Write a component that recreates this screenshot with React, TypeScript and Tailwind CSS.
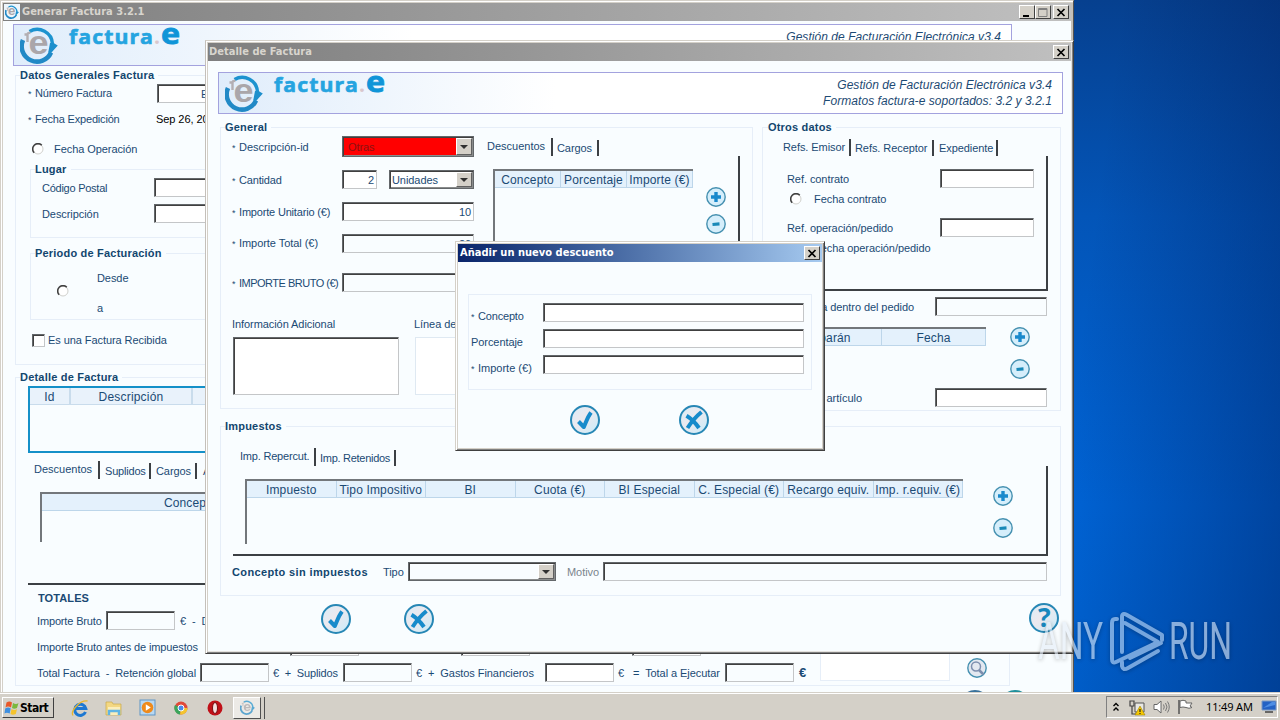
import type { ReactNode } from "react";
import clsx from "clsx";

type BoxProps = { className?: string; children?: ReactNode };

function Row({ className, children }: BoxProps) {
  return <div className={clsx("flex h-5 shrink-0 items-center whitespace-pre", className)}>{children}</div>;
}

function Label({ className, children }: BoxProps) {
  return <span className={clsx("shrink-0 whitespace-pre", className)}>{children}</span>;
}

function Required({ className, tracking = "tracking-[-0.18px]", children }: BoxProps & { tracking?: string }) {
  return (
    <Label className={clsx(tracking, className)}>
      <span className="inline-block w-[7px] text-[9px]">*</span>
      {children}
    </Label>
  );
}

function Field({ className, low, children }: BoxProps & { low?: boolean }) {
  return (
    <div
      className={clsx(
        "shrink-0 border border-t-[#63676a] border-r-[#c4c6c8] border-b-[#c4c6c8] border-l-[#63676a] pt-px leading-[17px] shadow-[inset_1px_1px_0_#404040]",
        low ? "self-end" : "self-start",
        className
      )}
    >
      {children}
    </div>
  );
}

function Combo({ className, children }: BoxProps) {
  return (
    <div
      className={clsx(
        "flex shrink-0 items-stretch justify-between self-start border border-t-[#63676a] border-r-[#63676a] border-b-[#63676a] border-l-[#63676a] p-px shadow-[inset_1px_1px_0_#404040,inset_-1px_-1px_0_#8a8c8c]",
        className
      )}
    >
      <span className="pl-px leading-[16px]">{children}</span>
      <span className="flex w-[16px] items-center justify-center border border-t-white border-r-[#606060] border-b-[#606060] border-l-white bg-[#d4d0c8]">
        <svg width="8" height="4" viewBox="0 0 8 4">
          <path d="M0 0h8L4 4z" fill="#303030" />
        </svg>
      </span>
    </div>
  );
}

function Group({ title, className, children }: BoxProps & { title?: string }) {
  return (
    <section className={clsx("shrink-0 border border-[#e6eef8]", className)}>
      {title && (
        <h2 className="-mt-[8px] flex h-[14px] pl-[4px] text-[11px] font-bold tracking-[0.2px] text-[#12466e]">
          <span className="bg-[#f9fdff] pr-1">{title}</span>
        </h2>
      )}
      {children}
    </section>
  );
}

function Tab({ className, children }: BoxProps) {
  return <div className={clsx("shrink-0 overflow-hidden border-r-2 border-[#3c4044] leading-[17px] whitespace-pre", className)}>{children}</div>;
}

function Table({ columns, className, cell }: { columns: string[]; className?: string; cell?: string }) {
  return (
    <div className={clsx("shrink-0 overflow-hidden border-t-2 border-l-2 border-[#73777b]", className)}>
      <div className="flex h-[17px] border-b border-[#bdd6ea] bg-[#e4f1fc] text-[12px] leading-[18px] tracking-[0.15px]">
        {columns.map((name, i) => (
          <div key={i} className={clsx("overflow-hidden border-r border-[#bdd6ea] text-center whitespace-nowrap", cell ?? "flex-1")}>
            {name}
          </div>
        ))}
      </div>
    </div>
  );
}

function Radio() {
  return (
    <svg width="12" height="12" viewBox="0 0 12 12" className="shrink-0">
      <circle cx="6" cy="6" r="5" fill="#fff" stroke="#d0d0cc" />
      <path d="M2.2 9.8A5.2 5.2 0 0 1 9.8 2.2" fill="none" stroke="#404040" strokeWidth="1.5" />
    </svg>
  );
}

function RoundIcon({ kind }: { kind: "check" | "cross" | "help" }) {
  return (
    <svg width="30" height="30" viewBox="0 0 30 30" className="shrink-0">
      <defs>
        <linearGradient id="round" x1="0" y1="0" x2="1" y2="1">
          <stop offset="0" stopColor="#d9edf9" />
          <stop offset="0.45" stopColor="#ece9ee" />
          <stop offset="1" stopColor="#c4ecfb" />
        </linearGradient>
      </defs>
      <circle cx="15" cy="15" r="14" fill="url(#round)" stroke="#2787b5" strokeWidth="2" />
      {kind === "check" && <path d="M8.5 16.5l5.3 5.5C16 17.500 17.500 12 21 7.500" fill="none" stroke="#178bcb" strokeWidth="4" strokeLinejoin="round" />}
      {kind === "cross" && (
        <g fill="none" stroke="#178bcb" strokeWidth="4">
          <path d="M22.5 7C17 11.500 13 16 8.500 23" />
          <path d="M7.500 10.800C12 13.500 16.500 18 20 23" />
        </g>
      )}
      {kind === "help" && (
        <text x="9" y="24" textLength="12.5" lengthAdjust="spacingAndGlyphs" fontFamily="Noto Sans" fontSize="26" fontWeight="bold" fill="#1787bd">
          ?
        </text>
      )}
    </svg>
  );
}

function SmallIcon({ kind }: { kind: "plus" | "minus" | "search" }) {
  return (
    <svg width="20" height="20" viewBox="0 0 20 20" className="shrink-0">
      <circle cx="10" cy="10" r="9.200" fill={kind === "search" ? "#e3e8f0" : "#d5eefb"} stroke="#4590b0" strokeWidth="1.400" />
      {kind === "plus" && <path d="M5 10h10M10 5v10" stroke="#1989cc" strokeWidth="3.400" />}
      {kind === "minus" && <path d="M6.500 10.500l7-0.600" stroke="#1989b8" strokeWidth="3.200" />}
      {kind === "search" && (
        <g fill="none" stroke="#7d8fae">
          <circle cx="9" cy="8.500" r="4.500" strokeWidth="1.500" />
          <path d="M12 12l4.500 4.500" strokeWidth="2.500" />
        </g>
      )}
    </svg>
  );
}

function Swirl({ size }: { size: number }) {
  return (
    <svg width={size} height={size} viewBox="0 0 38 38" className="shrink-0">
      <path d="M9.500 5.500A15.300 15.300 0 0 1 32.500 18" fill="none" stroke="#1d93cf" strokeWidth="3.400" />
      <path d="M31 26.500A15.300 15.300 0 0 1 3 14" fill="none" stroke="#2189c6" strokeWidth="4.600" />
      <path d="M30 17h3.500l4.300 2.500-4.500 5-3 3.500-2-2z" fill="#1d8fcc" />
      <path d="M4.500 8.500h3q0-2 3-1.500M7.500 8v8" fill="none" stroke="#b3aeb2" strokeWidth="2.400" />
      <text x="8.500" y="28" textLength="20" lengthAdjust="spacingAndGlyphs" fontFamily="Liberation Sans" fontSize="34" fontWeight="bold" fill="#aaa6aa">
        e
      </text>
    </svg>
  );
}

function Banner({ className }: { className?: string }) {
  return (
    <header className={clsx("flex h-[42px] shrink-0 items-start justify-between border border-[#a3a2de] bg-linear-to-r from-[#e0edfb] to-white to-40%", className)}>
      <div className="flex">
        <div className="mt-px ml-[6px]">
          <Swirl size={38} />
        </div>
        <svg width="120" height="28" viewBox="0 0 120 28" className="ml-[10px]">
          <g fontFamily="Open Sans" fontWeight="bold">
            <text x="1" y="19" fontSize="20" letterSpacing="1" fill="#25a4e0" stroke="#25a4e0" strokeWidth="0.600" textLength="85" lengthAdjust="spacingAndGlyphs">
              factura
            </text>
            <text x="86" y="19" fontSize="21" fill="#d9c7cd">
              .
            </text>
            <text x="93" y="19" fontSize="29" fill="#0f95d8" stroke="#0f95d8" strokeWidth="0.800" textLength="19" lengthAdjust="spacingAndGlyphs">
              e
            </text>
          </g>
        </svg>
      </div>
      <div className="mt-[4px] mr-[10px] text-right text-[12px] leading-[16px] tracking-[0.05px] text-[#1d4a73] italic">
        <p>Gestión de Facturación Electrónica v3.4</p>
        <p>Formatos factura-e soportados: 3.2 y 3.2.1</p>
      </div>
    </header>
  );
}

function WinButton({ kind }: { kind: "min" | "max" | "close" }) {
  return (
    <span className="flex h-[14px] w-[16px] items-center justify-center border border-t-white border-r-[#404040] border-b-[#404040] border-l-white bg-[#d4d0c8]">
      <svg width="12" height="11" viewBox="0 0 12 11" fill="none">
        {kind === "min" && <path d="M2 9h6" stroke="#000" strokeWidth="2" />}
        {kind === "max" && <path d="M1.500 1.500h8.500v8h-8.500zM1.500 2.500h8.500" stroke="#808080" />}
        {kind === "close" && <path d="M2.500 2l7 7M9.500 2l-7 7" stroke="#000" strokeWidth="1.700" />}
      </svg>
    </span>
  );
}

function TitleBar({ title, active, main }: { title: string; active?: boolean; main?: boolean }) {
  return (
    <div
      className={clsx(
        "flex h-[18px] shrink-0 items-center pr-[2px] pl-[1px] font-['DejaVu_Sans_Condensed','DejaVu_Sans',sans-serif] text-[11px] font-bold",
        active ? "bg-linear-to-r from-[#0a246a] to-[#a6caf0] text-white" : "bg-linear-to-r from-[#7f7f7f] to-[#c0c0c0] text-[#d8d5ce]"
      )}
    >
      {main && (
        <span className="mr-[2px] flex h-4 w-4 items-center justify-center bg-[#eef6fb]">
          <Swirl size={14} />
        </span>
      )}
      <span className={clsx("whitespace-nowrap", active ? "pl-px tracking-[0.02px]" : "tracking-[0.02px]")}>{title}</span>
      <span className="ml-auto flex">
        {main && <WinButton kind="min" />}
        {main && <WinButton kind="max" />}
        <span className={main ? "ml-[2px]" : ""}>
          <WinButton kind="close" />
        </span>
      </span>
    </div>
  );
}

function MainWindow() {
  return (
    <div className="absolute top-0 left-0 flex h-[693px] w-[1074px] flex-col overflow-hidden border border-t-[#d4d0c8] border-r-[#55524e] border-l-[#d4d0c8] bg-[#f9fdff] p-[2px] shadow-[inset_1px_1px_0_#fff,inset_2px_2px_0_#d4d0c8,inset_-2px_0_0_#c4c0b8]">
      <TitleBar title="Generar Factura 3.2.1" main />
      <Banner className="mt-[3px] ml-[10px] w-[999px]" />
      <Group title="Datos Generales Factura" className="mt-[9px] ml-[12px] h-[290px] w-[995px]">
        <Row className="mt-px pl-[12px]">
          <Required className="w-[129px]">Número Factura</Required>
          <Field low className="h-[19px] w-[90px] bg-white pl-[43px]">
            E
          </Field>
        </Row>
        <Row className="mt-[6px] pl-[12px]">
          <Required className="w-[128px]">Fecha Expedición</Required>
          <Label className="pb-px text-black">Sep 26, 2018</Label>
        </Row>
        <Row className="mt-[10px] pl-[16px]">
          <Radio />
          <Label className="ml-[10px]">Fecha Operación</Label>
        </Row>
        <Group title="Lugar" className="mt-[10px] ml-[14px] h-[69px]">
          <Row className="mt-[2px] pl-[11px]">
            <Label className="w-[112px] tracking-[-0.25px]">Código Postal</Label>
            <Field className="h-[19px] w-[120px] bg-white" />
          </Row>
          <Row className="mt-[6px] pl-[11px]">
            <Label className="w-[112px]">Descripción</Label>
            <Field className="h-[19px] w-[120px] bg-white" />
          </Row>
        </Group>
        <Group title="Periodo de Facturación" className="mt-[15px] ml-[14px] h-[67px]">
          <div className="flex pt-[8px] pl-[26px]">
            <div className="mt-[17px]">
              <Radio />
            </div>
            <div className="ml-[28px]">
              <Row>Desde</Row>
              <Row className="mt-[10px]">a</Row>
            </div>
          </div>
        </Group>
        <Row className="mt-[10px] pl-[16px]">
          <Field className="mt-[4px] h-[13px] w-[13px] bg-white" />
          <Label className="ml-[3px]">Es una Factura Recibida</Label>
        </Row>
      </Group>
      <Group title="Detalle de Factura" className="mt-[12px] ml-[12px] h-[309px] w-[995px]">
        <div className="mt-[2px] ml-[12px] h-[67px] border-2 border-[#1490c8]">
          <div className="flex h-[17px] border-b border-[#c9dcec] bg-[#e9f2fb] text-[12px] leading-[18px] tracking-[0.2px]">
            <span className="w-[41px] border-r-2 border-[#c9dcec] text-center">Id</span>
            <span className="w-[122px] border-r-2 border-[#c9dcec] text-center">Descripción</span>
          </div>
        </div>
        <div className="mt-[8px] ml-[12px] flex items-end">
          <Tab className="h-[18px] w-[72px] pl-[6px] tracking-normal">Descuentos</Tab>
          <Tab className="h-[16px] w-[51px] pl-[5px] tracking-[-0.2px]">Suplidos</Tab>
          <Tab className="h-[16px] w-[46px] pl-[5px]">Cargos</Tab>
          <Tab className="h-[16px] w-[60px] pl-[6px]">Anticipos</Tab>
        </div>
        <div className="ml-[12px] h-[106px] border-b-2 border-[#3c4044] pt-[13px] pl-[12px]">
          <Table columns={["Concepto", "", ""]} className="h-[50px] w-[894px]" />
        </div>
        <Row className="mt-[3px] pl-[22px] font-bold tracking-[0.1px]">TOTALES</Row>
        <Row className="mt-[3px] pl-[21px]">
          <Label className="w-[69px] tracking-[-0.15px]">Importe Bruto</Label>
          <Field className="h-[19px] w-[69px] bg-[#f9fdff]" />
          <Label className="ml-[5px]">{"€  -  Descuentos"}</Label>
        </Row>
        <Row className="mt-[6px] pl-[21px]">
          <Label className="w-[253px] tracking-[-0.13px]">Importe Bruto antes de impuestos</Label>
          <Field className="h-[19px] w-[69px] bg-white" />
          <Field className="ml-[102px] h-[19px] w-[69px] bg-white" />
          <Field className="ml-[102px] h-[19px] w-[69px] bg-white" />
        </Row>
        <Row className="mt-[6px] pl-[21px]">
          <Label className="w-[163px]">{"Total Factura  -  Retención global"}</Label>
          <Field className="h-[19px] w-[69px] bg-[#f9fdff]" />
          <Label className="w-[74px] pl-[4px] tracking-[-0.15px]">{"€  +  Suplidos"}</Label>
          <Field className="h-[19px] w-[69px] bg-[#f9fdff]" />
          <Label className="w-[133px] pl-[4px]">{"€  +  Gastos Financieros"}</Label>
          <Field className="h-[19px] w-[69px] bg-white" />
          <Label className="w-[111px] pl-[4px]">{"€   =  Total a Ejecutar"}</Label>
          <Field className="h-[19px] w-[69px] bg-[#f9fdff]" />
          <Label className="w-[26px] pl-[5px] text-[13px] font-bold">€</Label>
          <div className="mb-[2px] h-[56px] w-[130px] shrink-0 self-end border border-[#e6eef8] bg-white" />
          <div className="mb-[5px] ml-[17px] self-end">
            <SmallIcon kind="search" />
          </div>
        </Row>
      </Group>
      <div className="mt-[4px] ml-[957px] flex shrink-0 gap-[10px]">
        <span className="h-[30px] w-[30px] rounded-full border-2 border-[#39719b]" />
        <span className="h-[30px] w-[30px] rounded-full border-2 border-[#20909c]" />
      </div>
    </div>
  );
}

function DetailWindow() {
  return (
    <div className="absolute top-[40px] left-[205px] flex h-[614px] w-[869px] flex-col border border-t-[#d4d0c8] border-r-[#404040] border-b-[#404040] border-l-[#c4c0ba] bg-[#f9fdff] p-[2px] shadow-[inset_1px_1px_0_#fff,inset_-1px_-1px_0_#808080,inset_2px_2px_0_#d4d0c8,inset_-2px_-2px_0_#e4e2de]">
      <TitleBar title="Detalle de Factura" />
      <Banner className="mt-[11px] ml-[10px] w-[845px]" />
      <div className="mt-[13px] ml-[12px] flex shrink-0 gap-[9px]">
        <Group title="General" className="h-[282px] w-[533px]">
          <div className="flex">
            <div className="w-[259px] shrink-0 pl-[11px]">
              <Row className="mt-[3px]">
                <Required className="w-[110px]" tracking="tracking-normal">
                  Descripción-id
                </Required>
                <Combo className="-mt-px h-[21px] w-[132px] bg-[#ff0000] text-[#8c1212]">
                  <span className="pl-[3px] leading-[18px]">Otras</span>
                </Combo>
              </Row>
              <Row className="mt-[13px]">
                <Required className="w-[110px]">Cantidad</Required>
                <Field className="h-[19px] w-[35px] bg-white pr-[2px] text-right">2</Field>
                <Combo className="ml-[12px] h-[19px] w-[85px] bg-white">Unidades</Combo>
              </Row>
              <Row className="mt-[12px]">
                <Required className="w-[110px]">Importe Unitario (€)</Required>
                <Field className="h-[19px] w-[132px] bg-white pr-[2px] text-right">10</Field>
              </Row>
              <Row className="mt-[11px]">
                <Required className="w-[110px]" tracking="tracking-[-0.05px]">
                  Importe Total (€)
                </Required>
                <Field low className="h-[19px] w-[132px] bg-[#f9fdff] pr-[2px] text-right">
                  20
                </Field>
              </Row>
              <Row className="mt-[20px]">
                <Required className="w-[110px]" tracking="tracking-[-0.5px]">
                  IMPORTE BRUTO (€)
                </Required>
                <Field className="h-[19px] w-[132px] bg-[#f9fdff]" />
              </Row>
              <Row className="mt-[21px]">
                <Label className="w-[182px]">Información Adicional</Label>
                <Label>Línea de</Label>
              </Row>
              <div className="mt-[3px] ml-px flex gap-[16px]">
                <Field className="h-[58px] w-[166px] bg-white" />
                <div className="h-[58px] w-[65px] shrink-0 border border-[#dfe9f2] bg-white" />
              </div>
            </div>
            <div className="shrink-0">
              <div className="mt-[4px] flex items-end">
                <Tab className="h-[18px] w-[73px] pl-[7px] tracking-normal">Descuentos</Tab>
                <Tab className="h-[16px] w-[46px] pl-[4px]">Cargos</Tab>
              </div>
              <div className="flex h-[135px] w-[260px] items-start border-r-2 border-b-2 border-[#3c4044] pl-[13px]">
                <Table columns={["Concepto", "Porcentaje", "Importe (€)"]} className="mt-[13px] h-[90px] w-[200px]" />
                <div className="mt-[31px] ml-[13px] flex flex-col gap-[7px]">
                  <SmallIcon kind="plus" />
                  <SmallIcon kind="minus" />
                </div>
              </div>
            </div>
          </div>
        </Group>
        <Group title="Otros datos" className="h-[284px] w-[299px] pl-px">
          <div className="mt-[5px] ml-[12px] flex items-end">
            <Tab className="h-[17px] w-[75px] pl-[7px] leading-[15px]">Refs. Emisor</Tab>
            <Tab className="h-[16px] w-[83px] pl-[4px]">Refs. Receptor</Tab>
            <Tab className="h-[16px] w-[64px] pl-[5px]">Expediente</Tab>
          </div>
          <div className="ml-[12px] h-[135px] w-[272px] border-r-2 border-b-2 border-[#3c4044] pt-[13px]">
            <Row className="pl-[11px]">
              <Label className="w-[153px]">Ref. contrato</Label>
              <Field className="h-[19px] w-[94px] bg-white" />
            </Row>
            <Row className="pl-[14px]">
              <Radio />
              <Label className="ml-[12px]">Fecha contrato</Label>
            </Row>
            <Row className="mt-[9px] pl-[11px]">
              <Label className="w-[153px]">Ref. operación/pedido</Label>
              <Field className="h-[19px] w-[94px] bg-white" />
            </Row>
            <Row className="pl-[14px]">
              <Radio />
              <Label className="ml-[12px]">Fecha operación/pedido</Label>
            </Row>
          </div>
          <Row className="mt-[6px] pl-[23px]">
            <Label className="w-[127px] text-right">Línea dentro del pedido</Label>
            <Field className="ml-[21px] h-[19px] w-[112px] bg-[#f9fdff]" />
          </Row>
          <div className="mt-[10px] ml-[12px] flex h-[52px] items-start">
            <Table columns={["Albarán", "Fecha"]} className="h-[48px] w-[210px]" />
            <div className="ml-[24px] flex flex-col gap-[12px]">
              <SmallIcon kind="plus" />
              <SmallIcon kind="minus" />
            </div>
          </div>
          <Row className="mt-[9px] pl-[23px]">
            <Label className="w-[75px] text-right">Código artículo</Label>
            <Field className="ml-[73px] h-[19px] w-[112px] bg-white" />
          </Row>
        </Group>
      </div>
      <Group title="Impuestos" className="mt-[15px] ml-[12px] h-[170px] w-[841px]">
        <div className="mt-[15px] ml-[12px] flex items-end">
          <Tab className="h-[18px] w-[83px] pl-[7px] tracking-[-0.2px]">Imp. Repercut.</Tab>
          <Tab className="h-[16px] w-[80px] pl-[4px] tracking-[-0.28px]">Imp. Retenidos</Tab>
        </div>
        <div className="ml-[12px] flex h-[90px] w-[815px] items-start border-r-2 border-b-2 border-[#3c4044] pl-[12px]">
          <Table
            columns={["Impuesto", "Tipo Impositivo", "BI", "Cuota (€)", "BI Especial", "C. Especial (€)", "Recargo equiv.", "Imp. r.equiv. (€)"]}
            className="mt-[13px] h-[65px] w-[718px]"
            cell="w-[89.5px] shrink-0"
          />
          <div className="mt-[20px] ml-[30px] flex flex-col gap-[12px]">
            <SmallIcon kind="plus" />
            <SmallIcon kind="minus" />
          </div>
        </div>
        <Row className="mt-[6px] pl-[11px]">
          <Label className="w-[151px] font-bold tracking-[0.37px] text-[#12466e]">Concepto sin impuestos</Label>
          <Label className="w-[25px]">Tipo</Label>
          <Combo className="h-[19px] w-[148px] bg-[#f9fdff]" />
          <Label className="ml-[11px] w-[36px] text-[#7b858d]">Motivo</Label>
          <Field className="h-[19px] w-[444px] bg-[#f9fdff]" />
        </Row>
      </Group>
      <div className="mt-[8px] ml-[113px] flex shrink-0 gap-[53px]">
        <RoundIcon kind="check" />
        <RoundIcon kind="cross" />
        <div className="-mt-px ml-[542px]">
          <RoundIcon kind="help" />
        </div>
      </div>
    </div>
  );
}

function DiscountDialog() {
  return (
    <div className="absolute top-[241px] left-[455px] flex h-[210px] w-[370px] flex-col border border-t-[#d4d0c8] border-r-[#404040] border-b-[#404040] border-l-[#d4d0c8] bg-[#f9fdff] p-[2px] shadow-[inset_1px_1px_0_#fff,inset_-1px_-1px_0_#808080,inset_2px_2px_0_#d4d0c8,inset_-2px_-2px_0_#d4d0c8]">
      <TitleBar title="Añadir un nuevo descuento" active />
      <Group className="mt-[32px] ml-[10px] h-[96px] w-[344px] pt-[8px] pl-[2px]">
        <Row className="mb-[6px]">
          <Required className="w-[72px] pt-[6px]">Concepto</Required>
          <Field className="h-[19px] w-[261px] bg-white" />
        </Row>
        <Row className="mb-[6px]">
          <Label className="w-[72px] pt-[6px]">Porcentaje</Label>
          <Field className="h-[19px] w-[261px] bg-white" />
        </Row>
        <Row>
          <Required className="w-[72px] pt-[6px]" tracking="tracking-normal">
            Importe (€)
          </Required>
          <Field className="h-[19px] w-[261px] bg-white" />
        </Row>
      </Group>
      <div className="mt-[15px] ml-[112px] flex gap-[79px]">
        <RoundIcon kind="check" />
        <RoundIcon kind="cross" />
      </div>
    </div>
  );
}

function Watermark() {
  return (
    <svg width="200" height="64" viewBox="0 0 200 64" className="absolute top-[609px] left-[1034px] opacity-60 drop-shadow-[0_1px_2px_rgba(0,0,0,0.45)]">
      <g fill="#e4edf8" fontFamily="Roboto" fontSize="52" fontWeight="400">
        <text x="4" y="50" textLength="65" lengthAdjust="spacingAndGlyphs">
          ANY
        </text>
        <text x="135" y="50" textLength="63" lengthAdjust="spacingAndGlyphs">
          RUN
        </text>
      </g>
      <g fill="none" stroke="#c5dcf6" strokeWidth="4" strokeLinejoin="round" strokeLinecap="round">
        <path d="M83 10h-2q-3 0-3 4v36q0 5 4 3l42-20-33-19" />
        <path d="M88 43V8q0-5 5-2l35 20v5M96 49l31-15M88 53v4q1 5 6 2l30-17" />
      </g>
    </svg>
  );
}

function Taskbar() {
  return (
    <footer className="absolute top-[692px] left-0 flex h-[28px] w-full items-center border-t border-[#d4d0c8] bg-[#d4d0c8] shadow-[inset_0_1px_0_#fff]">
      <div className="mt-[2px] ml-[2px] flex h-[21px] w-[52px] items-center border border-t-white border-r-[#404040] border-b-[#404040] border-l-white pl-[1px] font-['DejaVu_Sans_Condensed','DejaVu_Sans',sans-serif] text-[12px] font-bold tracking-[-0.5px] text-black">
        <svg width="16" height="16" viewBox="0 0 16 16" className="shrink-0">
          <path d="M2.500 2.500q3-2 5.500 0L7 7.500q-3-2-5.500 0z" fill="#e8582a" />
          <path d="M9 3q3 2 5.500 0l-1.500 5q-3 1.500-5 0z" fill="#7ab83c" />
          <path d="M1.200 8.500q3-2 5.500 0l-1 5q-3-1.500-5.200 0z" fill="#3e8fe0" />
          <path d="M7.500 9q3 2 5.500 0l-1.200 5q-3 1.500-5.300 0z" fill="#f5c32c" />
        </svg>
        Start
      </div>
      <div className="mt-[2px] ml-[17px] flex items-center">
        <svg width="18" height="18" viewBox="0 0 18 18">
          <path d="M14.500 13A5.600 5.600 0 1 1 14.800 9.500H5" fill="none" stroke="#1d78d2" strokeWidth="3" />
          <path d="M2 16.500C-1 12 9 1 16.500 2" fill="none" stroke="#e8b52c" strokeWidth="1.300" />
        </svg>
        <svg width="18" height="18" viewBox="0 0 18 18" className="ml-[16px]">
          <path d="M1 3h6l1 2h8v11H1z" fill="#f3d782" stroke="#c9a94c" strokeWidth="0.700" />
          <path d="M3 8h12v8H3z" fill="#fbeebb" />
          <path d="M4 16v-4h10v4" fill="none" stroke="#5fb4e4" strokeWidth="2.500" />
        </svg>
        <svg width="18" height="18" viewBox="0 0 18 18" className="ml-[16px]">
          <rect x="1" y="1" width="15" height="15" fill="#b8d8f2" stroke="#5f95c6" />
          <circle cx="8.500" cy="8.500" r="5.800" fill="#ee8a1c" />
          <path d="M6.800 5.200l5 3.300-5 3.300z" fill="#fff" />
        </svg>
        <svg width="16" height="16" viewBox="0 0 16 16" className="ml-[16px]">
          <circle cx="8" cy="8" r="6.500" fill="#e04a3a" />
          <path d="M8 8L2 5a6.500 6.500 0 0 0 5 9.500z" fill="#3ba55b" />
          <path d="M8 8h6.500A6.500 6.500 0 0 1 7 14.500z" fill="#f4c52f" />
          <circle cx="8" cy="8" r="3" fill="#4b8bea" stroke="#fff" />
        </svg>
        <svg width="16" height="16" viewBox="0 0 16 16" className="ml-[18px]">
          <ellipse cx="8" cy="8" rx="7.500" ry="7.500" fill="#c01018" />
          <ellipse cx="8" cy="8" rx="2.500" ry="5.500" fill="#f3dede" stroke="#7a0a10" />
        </svg>
      </div>
      <div className="mt-[2px] ml-[10px] flex h-[22px] w-[28px] items-center justify-center border border-t-white border-r-[#505050] border-b-[#505050] border-l-white bg-[#eceae6]">
        <span className="flex h-4 w-4 items-center justify-center opacity-70">
          <Swirl size={15} />
        </span>
      </div>
      <span className="mt-[2px] ml-[1px] h-[22px] w-[3px] border-r border-[#505050] bg-[#d4d0c8]" />
      <div className="mt-[1px] mr-[2px] ml-auto flex h-[22px] w-[172px] items-center border border-t-[#808080] border-r-white border-b-white border-l-[#808080] font-['Noto_Sans',sans-serif] text-[11px] text-black">
        <svg width="8" height="10" viewBox="0 0 8 10" className="ml-[5px]">
          <path d="M1.500 4L4 1.500 6.500 4M1.500 8.500L4 6l2.500 2.500" fill="none" stroke="#000" strokeWidth="1.400" />
        </svg>
        <svg width="17" height="17" viewBox="0 0 17 17" className="ml-[9px]">
          <path d="M1 2h4v5H1zM3 7v8h9" fill="none" stroke="#444" strokeWidth="1.200" />
          <path d="M6 4h9v9H6z" fill="#e8e8e4" stroke="#555" />
          <path d="M11 7l5 9H6z" fill="#f6c800" stroke="#8f7500" strokeWidth="0.500" />
          <path d="M11 10v3M11 14v1" stroke="#222" strokeWidth="1.200" />
        </svg>
        <svg width="17" height="16" viewBox="0 0 17 16" className="ml-[7px]">
          <path d="M1 5.500h3L8 2v12l-4-3.500H1z" fill="#fff" stroke="#666" />
          <path d="M10.500 5.500q1.500 2.500 0 5M12.500 4q3 4 0 8M14.500 2.500q3.500 5.500 0 11" fill="none" stroke="#777" />
        </svg>
        <svg width="17" height="16" viewBox="0 0 17 16" className="ml-[7px]">
          <path d="M2 1v14" stroke="#555" strokeWidth="1.500" />
          <path d="M3 2q3-1.500 6 0v2h6l-2 3 2 1.500q-3 1.500-6 0V8.500q-3-1-6 0z" fill="#fff" stroke="#666" />
        </svg>
        <span className="ml-[12px] w-[51px] shrink-0 tracking-[-0.15px] whitespace-nowrap">11:49 AM</span>
        <svg width="16" height="14" viewBox="0 0 16 14" className="ml-[4px]">
          <path d="M1 1h14v9H1z" fill="#2462c4" stroke="#7a99c4" />
          <path d="M2 8l9-6h3v3z" fill="#4e8ee4" />
          <path d="M4 12h8" stroke="#444" strokeWidth="1.500" />
        </svg>
      </div>
    </footer>
  );
}

export default function App() {
  return (
    <main className="relative h-[720px] w-[1280px] overflow-hidden bg-[linear-gradient(97deg,transparent_82%,rgba(0,22,80,0.45)_100%),linear-gradient(180deg,#06408f_0%,#0355b8_30%,#0064d6_70%,#0062d0_100%)] font-['Liberation_Sans',Arial,sans-serif] text-[11px] leading-[14px] tracking-[-0.07px] text-[#1b4a74]">
      <MainWindow />
      <DetailWindow />
      <DiscountDialog />
      <Watermark />
      <Taskbar />
    </main>
  );
}
